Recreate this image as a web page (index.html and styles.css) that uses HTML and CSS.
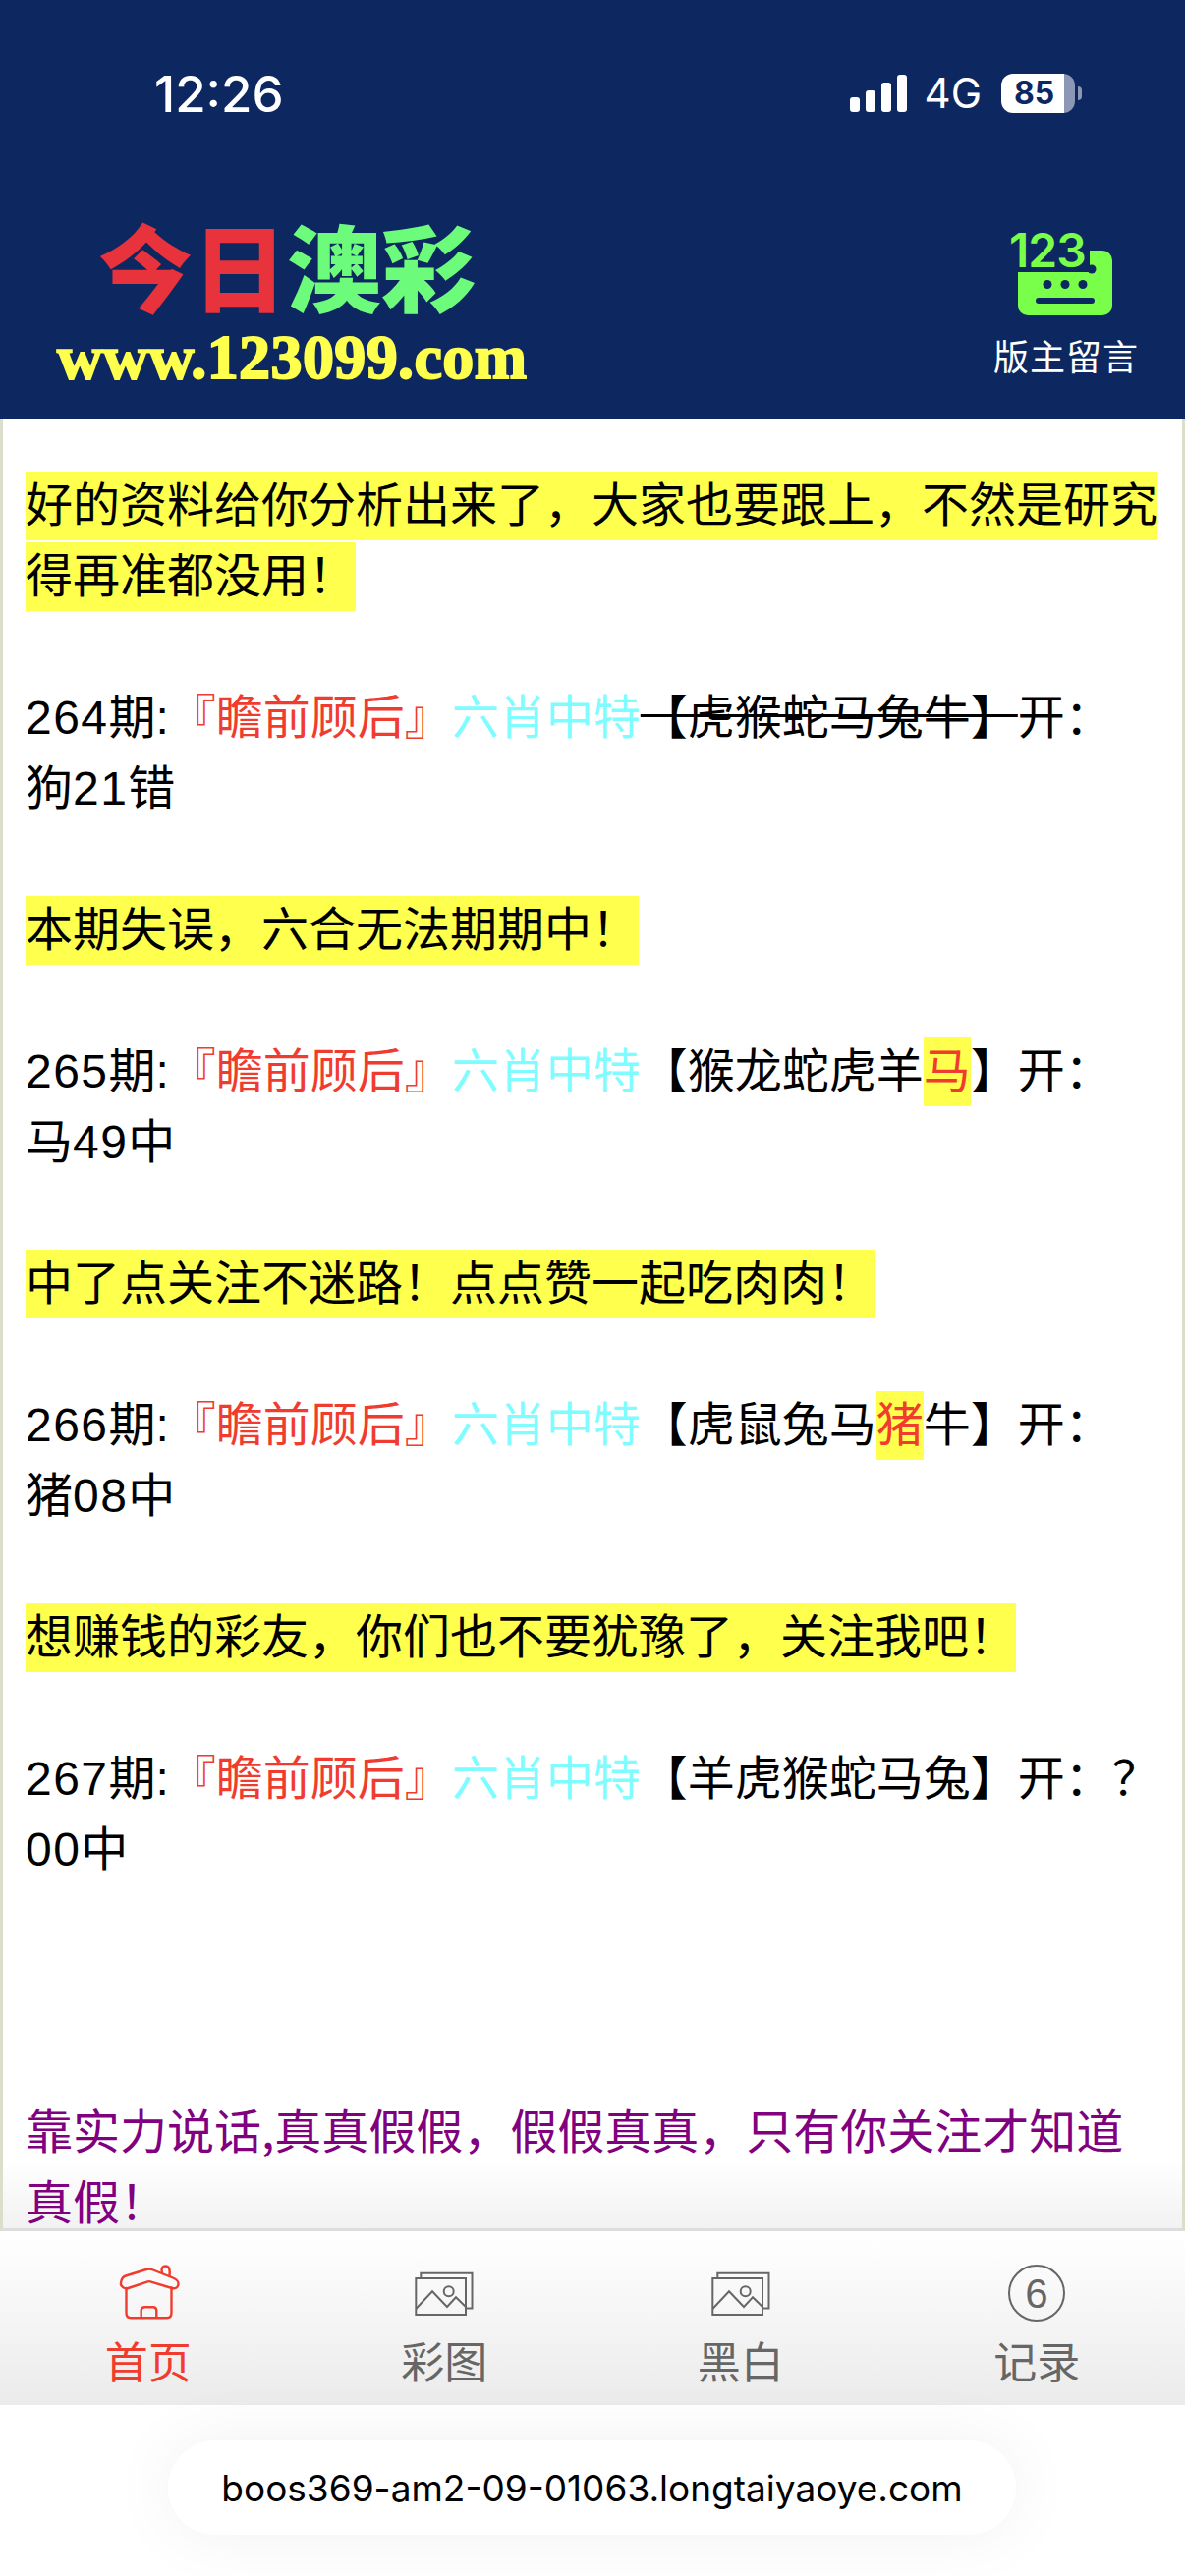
FILE: index.html
```html
<!DOCTYPE html>
<html lang="zh-CN">
<head>
<meta charset="utf-8">
<title>今日澳彩</title>
<link rel="stylesheet" href="styles.css">
</head>
<body>
<div class="page">
  <header class="header">
    <div class="status">
      <span class="time">12:26</span>
      <div class="status-right">
        <svg class="signal" width="58" height="38" viewBox="0 0 58 38">
          <rect x="0" y="23" width="10" height="15" rx="3"/>
          <rect x="16" y="16" width="10" height="22" rx="3"/>
          <rect x="32" y="8" width="10" height="30" rx="3"/>
          <rect x="48" y="0" width="10" height="38" rx="3"/>
        </svg>
        <span class="net">4G</span>
        <div class="battery"><span class="batt-num">85</span></div>
        <span class="batt-nub"></span>
      </div>
    </div>
    <div class="brand-row">
      <div class="logo">
        <div class="logo-title"><span class="logo-red">今日</span><span class="logo-green">澳彩</span></div>
        <div class="logo-url">www.123099.com</div>
      </div>
      <div class="note">
        <svg class="note-icon" width="110" height="90" viewBox="0 0 110 90">
          <path class="note-box" d="M9 40H82V18H95a10 10 0 0 1 10 10V74a10 10 0 0 1-10 10H19a10 10 0 0 1-10-10Z"/>
          <text class="note-num" x="0" y="35">123</text>
          <circle class="note-dot" cx="84" cy="37" r="4.5"/>
          <circle class="note-dot" cx="39" cy="52.5" r="4.5"/>
          <circle class="note-dot" cx="57" cy="52.5" r="4.5"/>
          <circle class="note-dot" cx="75" cy="52.5" r="4.5"/>
          <rect class="note-dot" x="27" y="66" width="60" height="6" rx="3"/>
        </svg>
        <span class="note-label">版主留言</span>
      </div>
    </div>
  </header>

  <main class="content">
    <p><span class="hl">好的资料给你分析出来了，大家也要跟上，不然是研究得再准都没用！</span></p>
    <p class="blank">&nbsp;</p>
    <p><span class="num">264</span>期<span class="lat">:</span><span class="red">『瞻前顾后』</span><span class="cyan">六肖中特</span><span class="strike">【虎猴蛇马兔牛】</span>开：<br>狗<span class="num">21</span>错</p>
    <p class="blank">&nbsp;</p>
    <p><span class="hl">本期失误，六合无法期期中！</span></p>
    <p class="blank">&nbsp;</p>
    <p><span class="num">265</span>期<span class="lat">:</span><span class="red">『瞻前顾后』</span><span class="cyan">六肖中特</span>【猴龙蛇虎羊<span class="hl red">马</span>】开：<br>马<span class="num">49</span>中</p>
    <p class="blank">&nbsp;</p>
    <p><span class="hl">中了点关注不迷路！点点赞一起吃肉肉！</span></p>
    <p class="blank">&nbsp;</p>
    <p><span class="num">266</span>期<span class="lat">:</span><span class="red">『瞻前顾后』</span><span class="cyan">六肖中特</span>【虎鼠兔马<span class="hl red">猪</span>牛】开：<br>猪<span class="num">08</span>中</p>
    <p class="blank">&nbsp;</p>
    <p><span class="hl">想赚钱的彩友，你们也不要犹豫了，关注我吧！</span></p>
    <p class="blank">&nbsp;</p>
    <p><span class="num">267</span>期<span class="lat">:</span><span class="red">『瞻前顾后』</span><span class="cyan">六肖中特</span>【羊虎猴蛇马兔】开：？<br><span class="num">00</span>中</p>
    <p class="blank">&nbsp;</p>
    <p class="blank">&nbsp;</p>
    <p class="blank">&nbsp;</p>
    <p class="purple">靠实力说话,真真假假，假假真真，只有你关注才知道<br>真假！</p>
  </main>

  <nav class="tabs">
    <a class="tab tab-active">
      <svg class="tab-icon icon-red" width="120" height="80" viewBox="0 0 120 80">
        <path d="M37 39.5C33 38 31.5 36 32 33.5C32.5 30 34 27.5 37 26.5L58 20Q60.7 19 63.5 20L85 28.5C89 30 91 33 90.5 35.5C90 38.5 87 40 84 39L62 32.3Q60.7 32 59.5 32.3L38 39.5"/>
        <path d="M74 23.5C72.5 18 75 16.5 77.5 16.5C80.5 16.5 82.5 19 81.5 26.5"/>
        <path d="M37.5 39V64C37.5 67.5 39.5 69.3 42 69.3H79C81.5 69.3 83.5 67.5 83.5 64V38.5"/>
        <path d="M52.7 69V62C52.7 59.5 54.5 58.3 56.5 58.3H64.5C66.5 58.3 68.3 59.5 68.3 62V69"/>
      </svg>
      <span class="tab-label">首页</span>
    </a>
    <a class="tab">
      <svg class="tab-icon icon-grey" width="120" height="80" viewBox="0 0 120 80">
        <path d="M36.3 29V23.7H88.5V59.5H82"/>
        <rect x="31.3" y="29" width="50.7" height="37"/>
        <path d="M31.3 60L48 42.3L63 58L72 48.3L82 58"/>
        <circle cx="64.7" cy="42.3" r="5"/>
      </svg>
      <span class="tab-label">彩图</span>
    </a>
    <a class="tab">
      <svg class="tab-icon icon-grey" width="120" height="80" viewBox="0 0 120 80">
        <path d="M36.3 29V23.7H88.5V59.5H82"/>
        <rect x="31.3" y="29" width="50.7" height="37"/>
        <path d="M31.3 60L48 42.3L63 58L72 48.3L82 58"/>
        <circle cx="64.7" cy="42.3" r="5"/>
      </svg>
      <span class="tab-label">黑白</span>
    </a>
    <a class="tab">
      <svg class="tab-icon icon-grey" width="120" height="80" viewBox="0 0 120 80">
        <circle cx="60" cy="44" r="28"/>
        <text class="six" x="60" y="59">6</text>
      </svg>
      <span class="tab-label">记录</span>
    </a>
  </nav>

  <footer class="addr">
    <div class="pill">boos369-am2-09-01063.longtaiyaoye.com</div>
  </footer>
</div>
</body>
</html>
```
FILE: styles.css
```css
* { box-sizing: border-box; }
html, body { margin: 0; padding: 0; background: #fff; }
body { font-family: "Noto Sans CJK SC", sans-serif; }
.page { width: 1206px; height: 2622px; display: flex; flex-direction: column; overflow: hidden; }

.header { height: 426px; flex: none; background: #0d2861; color: #fff; }
.status { height: 190px; display: flex; justify-content: space-between; align-items: center; padding: 0 105px 0 157px; }
.time { font-family: Inter, sans-serif; font-size: 51px; font-weight: 500; line-height: 1; }
.status-right { display: flex; align-items: center; }
.signal { fill: #fff; margin-right: 18px; }
.net { font-family: Inter, sans-serif; font-size: 42px; font-weight: 400; margin-right: 20px; line-height: 1; }
.battery { width: 75px; height: 40px; border-radius: 12px; background: linear-gradient(90deg, #fff 0 85%, #8b97b4 85% 100%); display: flex; align-items: center; padding-left: 13px; }
.batt-num { font-family: Inter, sans-serif; font-size: 32px; font-weight: 700; color: #0d2861; line-height: 1; }
.batt-nub { width: 4px; height: 14px; margin-left: 3px; background: #8b97b4; border-radius: 0 4px 4px 0; }

.brand-row { height: 236px; display: flex; justify-content: space-between; padding: 31px 48px 0 58px; }
.logo-title { font-weight: 900; font-size: 96px; line-height: 96px; padding-left: 42px; white-space: nowrap; }
.logo-red { color: #e8323c; }
.logo-green { color: #6dfb7b; }
.logo-url { font-family: "Liberation Serif", serif; font-weight: 700; font-size: 64px; line-height: 64px; letter-spacing: .4px; color: #ffff4d; -webkit-text-stroke: 2px #ffff4d; margin-top: 15px; white-space: nowrap; }

.note { display: flex; flex-direction: column; align-items: center; width: 146px; padding-top: 16px; }
.note-icon { margin-left: -6px; overflow: visible; }
.note-box { fill: #79ff4a; }
.note-num { font-family: Inter, sans-serif; font-size: 48px; font-weight: 600; letter-spacing: -1px; fill: #79ff4a; stroke: #0d2861; stroke-width: 8px; paint-order: stroke; }
.note-dot { fill: #0d2861; }
.note-label { font-size: 36px; line-height: 44px; margin-top: 12px; white-space: nowrap; letter-spacing: 1px; }

.content { flex: 1; min-height: 0; overflow: hidden; border-left: 3px solid #d9dfcb; border-right: 3px solid #d9dfcb; border-bottom: 3px solid #ddd; padding: 48px 20px 0 23px; font-size: 48px; line-height: 72px; color: #000; background: linear-gradient(#fff calc(100% - 70px), #f2f2f2); }
.content p { margin: 0; }
.num { font-family: "Liberation Sans", sans-serif; letter-spacing: .03em; line-height: 1; }
.lat { font-family: "Liberation Sans", sans-serif; line-height: 1; }
.hl { padding-bottom: 5px; background: linear-gradient(transparent 5px, #ffff4d 5px); }
.red { color: #f03c2e; }
.cyan { color: #7ffcff; }
.strike { text-decoration: line-through; text-decoration-thickness: 3px; text-decoration-color: #000; }
.purple { color: #800080; }

.tabs { height: 177px; flex: none; display: flex; background: linear-gradient(#fff, #ebebeb); }
.tab { flex: 1; display: flex; flex-direction: column; align-items: center; padding-top: 19px; color: #666; }
.tab-icon { display: block; flex: none; }
.icon-red { fill: none; stroke: #f03c2e; stroke-width: 2.4; stroke-linecap: round; stroke-linejoin: round; }
.icon-grey { fill: none; stroke: #666; stroke-width: 2; }
.six { font-family: "Liberation Sans", sans-serif; font-size: 42px; text-anchor: middle; fill: #666; stroke: none; }
.tab-label { font-size: 44px; line-height: 64px; white-space: nowrap; }
.tab-active { color: #f03c2e; }

.addr { height: 174px; flex: none; background: #fff; padding: 36px 172px 0 171px; }
.pill { height: 96px; border-radius: 48px; background: #fff; box-shadow: 0 0 70px rgba(0,0,0,.06); display: flex; align-items: center; justify-content: center; font-family: Inter, sans-serif; font-size: 37px; color: #000; white-space: nowrap; }
```
